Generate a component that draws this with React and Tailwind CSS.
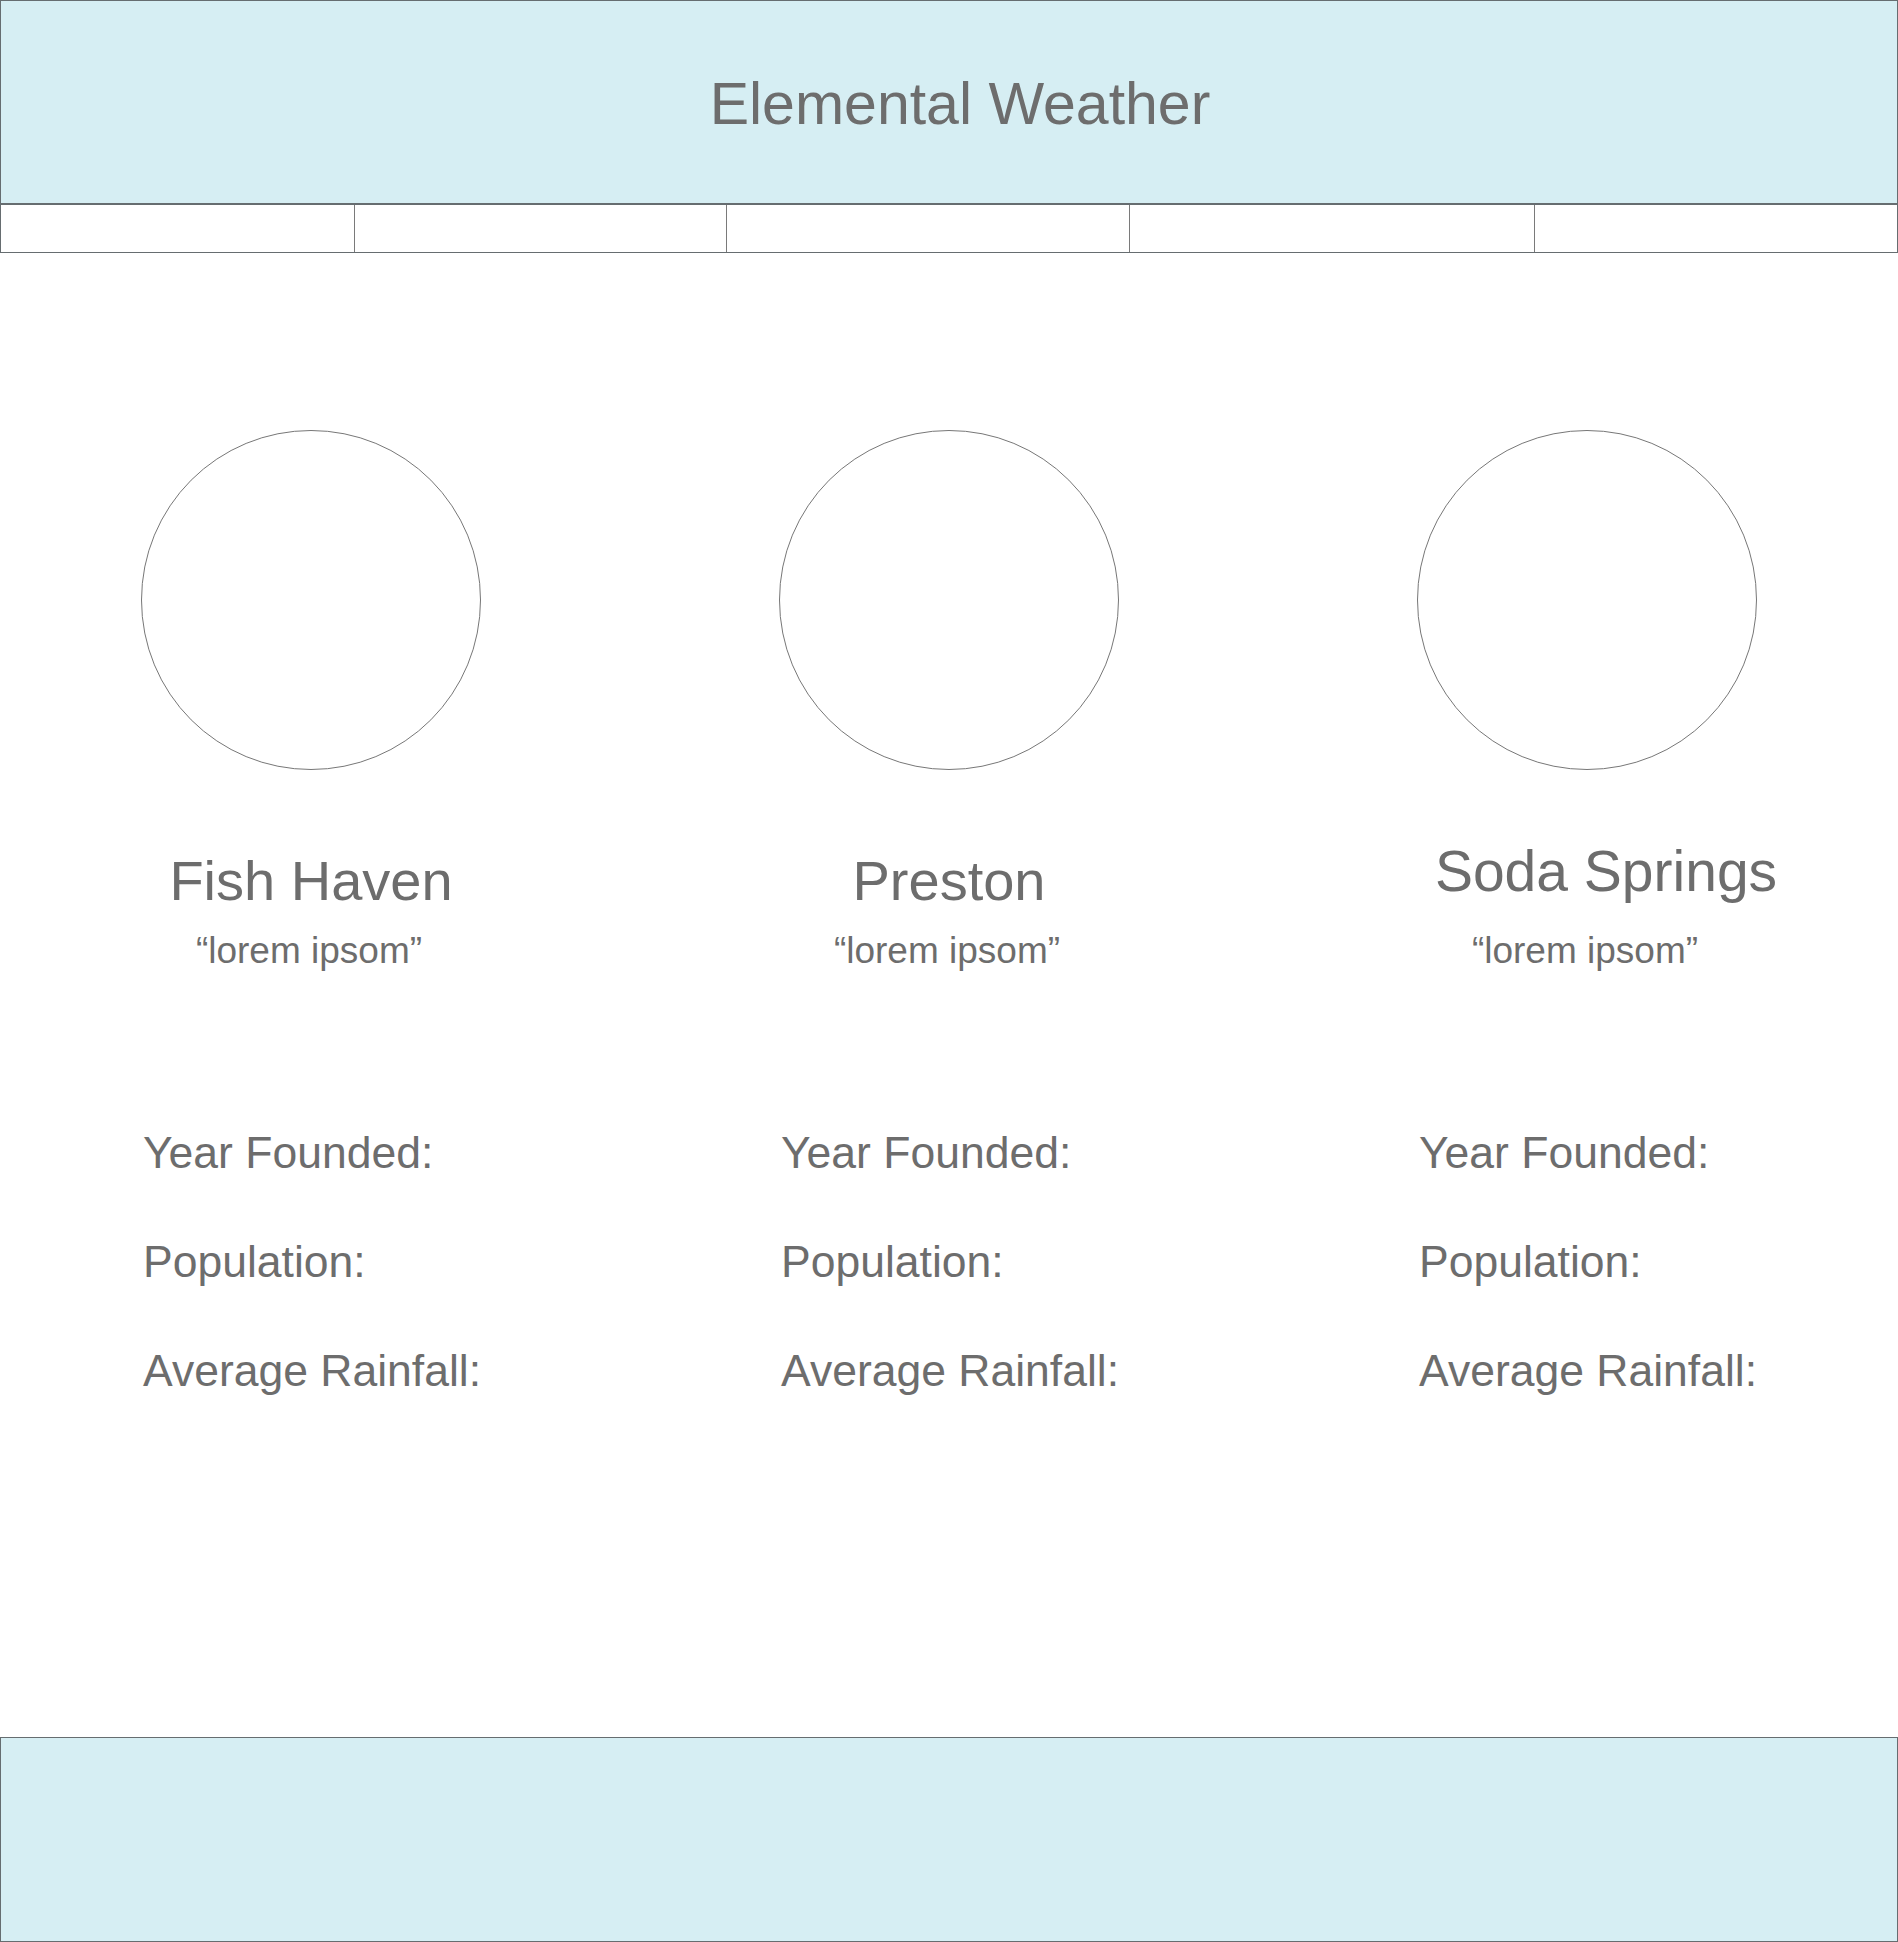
const cities = [
  { name: "Fish Haven", nameClass: "" },
  { name: "Preston", nameClass: "" },
  { name: "Soda Springs", nameClass: "text-[57px] translate-x-[19px] -translate-y-[10px]" },
];

const navWidths = ["w-[354px]", "w-[372px]", "w-[403px]", "w-[405px]", "flex-1"];

export default function App() {
  return (
    <div className="w-[1898px] h-[1942px] bg-white flex flex-col text-[#6d6d6d] font-['Liberation_Sans',Arial,sans-serif]">
      {/* Header */}
      <header className="h-[205px] shrink-0 bg-[#d6eef3] border border-[#666d70] border-b-2 flex items-center justify-center">
        <h1 className="text-[59px] leading-none pl-[22px] pt-[4px]">Elemental Weather</h1>
      </header>

      {/* Nav */}
      <nav className="h-[48px] shrink-0 flex border-x border-b border-[#666d70]">
        {navWidths.map((w, i) => (
          <div
            key={i}
            className={`${w} h-full ${i < navWidths.length - 1 ? "border-r border-[#7a7a7a]" : ""}`}
          ></div>
        ))}
      </nav>

      {/* Cities */}
      <main className="flex-1 flex justify-between px-[141px] pt-[177px]">
        {cities.map((c) => (
          <div key={c.name} className="w-[340px] flex flex-col">
            <div className="w-[340px] h-[340px] rounded-full border border-[#777777]"></div>

            <div className="flex justify-center mt-[79px]">
              <h2 className={`text-[56px] leading-[64px] whitespace-nowrap ${c.nameClass}`}>{c.name}</h2>
            </div>
            <div className="flex justify-center mt-[18px] pr-[4px]">
              <p className="text-[37px] leading-[40px] whitespace-nowrap">“lorem ipsom”</p>
            </div>

            <div className="flex flex-col gap-[59px] mt-[157px] pl-[2px] text-[44.5px] leading-[50px] whitespace-nowrap">
              <p>Year Founded:</p>
              <p>Population:</p>
              <p>Average Rainfall:</p>
            </div>
          </div>
        ))}
      </main>

      {/* Footer */}
      <footer className="h-[205px] shrink-0 bg-[#d6eef3] border border-[#666d70]"></footer>
    </div>
  );
}
